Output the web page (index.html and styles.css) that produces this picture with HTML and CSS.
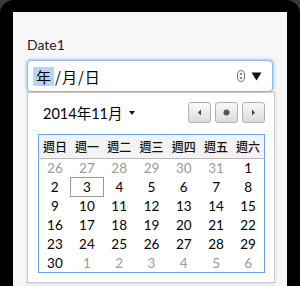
FILE: index.html
```html
<!DOCTYPE html>
<html lang="zh-Hant">
<head>
    <meta charset="UTF-8">
    <meta name="viewport" content="width=device-width, initial-scale=1.0">
    <title>Date1</title>
    <link rel="stylesheet" href="styles.css">
</head>
<body>
    <div class="device">
        <div class="screen">
            <label class="field-label" for="date1">Date1</label>
            <div class="date-input" id="date1">
                <span class="seg seg-active">年</span><span class="sep">/</span><span class="seg">月</span><span class="sep">/</span><span class="seg">日</span>
                <span class="spin">
                    <svg width="8" height="12" viewBox="0 0 8 12">
                        <rect x="0.5" y="0.5" width="7" height="11" rx="3.5" fill="#fff" stroke="#777"/>
                        <path d="M2.3 4.6 L4 2.8 L5.7 4.6 Z" fill="#444"/>
                        <path d="M2.3 7.4 L4 9.2 L5.7 7.4 Z" fill="#444"/>
                    </svg>
                </span>
                <span class="drop">
                    <svg width="11" height="9" viewBox="0 0 11 9"><path d="M0.5 0.5 L10.5 0.5 L5.5 8.5 Z" fill="#111"/></svg>
                </span>
            </div>
            <div class="picker">
                <div class="picker-head">
                    <span class="month">2014年11月<span class="caret"></span></span>
                    <div class="nav">
                        <button class="nav-btn"><svg width="5" height="7" viewBox="0 0 5 7"><path d="M4 0.5 L4 6.5 L1 3.5 Z" fill="#444"/></svg></button>
                        <button class="nav-btn"><svg width="7" height="7" viewBox="0 0 7 7"><circle cx="3.5" cy="3.5" r="3" fill="#555"/></svg></button>
                        <button class="nav-btn"><svg width="5" height="7" viewBox="0 0 5 7"><path d="M1 0.5 L1 6.5 L4 3.5 Z" fill="#444"/></svg></button>
                    </div>
                </div>
                <table class="cal">
                    <thead>
                        <tr><th>週日</th><th>週一</th><th>週二</th><th>週三</th><th>週四</th><th>週五</th><th>週六</th></tr>
                    </thead>
                    <tbody>
                        <tr><td class="other">26</td><td class="other">27</td><td class="other">28</td><td class="other">29</td><td class="other">30</td><td class="other">31</td><td>1</td></tr>
                        <tr><td>2</td><td class="today">3</td><td>4</td><td>5</td><td>6</td><td>7</td><td>8</td></tr>
                        <tr><td>9</td><td>10</td><td>11</td><td>12</td><td>13</td><td>14</td><td>15</td></tr>
                        <tr><td>16</td><td>17</td><td>18</td><td>19</td><td>20</td><td>21</td><td>22</td></tr>
                        <tr><td>23</td><td>24</td><td>25</td><td>26</td><td>27</td><td>28</td><td>29</td></tr>
                        <tr><td>30</td><td class="other">1</td><td class="other">2</td><td class="other">3</td><td class="other">4</td><td class="other">5</td><td class="other">6</td></tr>
                    </tbody>
                </table>
            </div>
        </div>
    </div>
</body>
</html>
```

FILE: styles.css
```css
html, body {
    margin: 0;
    padding: 0;
    background: #3a3a3a;
}
body {
    font-family: Lato, "Noto Sans CJK TC", sans-serif;
    color: #111;
}
.device {
    width: 300px;
    height: 286px;
    box-sizing: border-box;
    background: #000;
    border-radius: 14px 14px 0 0;
    padding: 12px 13px 0 13px;
    overflow: hidden;
}
.screen {
    height: 274px;
    background: #f7f7f7;
    padding: 24px 12px 0 14px;
    box-sizing: border-box;
}
.field-label {
    display: block;
    font-size: 14px;
    line-height: 17px;
    margin-bottom: 7px;
    color: #222;
}
.date-input {
    width: 246px;
    height: 32px;
    box-sizing: border-box;
    display: flex;
    align-items: center;
    padding-left: 5px;
    background: #fff;
    border: 1px solid #8db7e8;
    border-radius: 4px;
    box-shadow: 0 0 3px 1px rgba(110, 165, 230, 0.55);
    font-family: "Noto Sans CJK TC", sans-serif;
    font-size: 15px;
    color: #000;
}
.seg {
    line-height: 19px;
}
.seg-active {
    background: #b5d5fb;
    padding: 0 3px;
}
.sep {
    margin: 0 1px;
}
.spin {
    margin-left: auto;
    display: flex;
}
.drop {
    display: flex;
    margin: 0 10px 0 6px;
}
.picker {
    width: 248px;
    height: 191px;
    box-sizing: border-box;
    background: #fff;
    border: 1px solid #c9c9c9;
    box-shadow: 0 1px 3px rgba(0, 0, 0, 0.12);
    padding: 9px 9px 10px 10px;
}
.picker-head {
    display: flex;
    align-items: center;
    justify-content: space-between;
    height: 21px;
    margin-bottom: 11px;
}
.month {
    padding-left: 5px;
    font-size: 14.5px;
    display: flex;
    align-items: center;
    color: #000;
}
.caret {
    display: inline-block;
    margin-left: 7px;
    border-left: 3.5px solid transparent;
    border-right: 3.5px solid transparent;
    border-top: 4px solid #111;
}
.nav {
    display: flex;
    gap: 4px;
}
.nav-btn {
    width: 23px;
    height: 21px;
    padding: 0;
    display: flex;
    align-items: center;
    justify-content: center;
    border: 1px solid #b0b0b0;
    border-radius: 3px;
    background: linear-gradient(#fafafa, #dcdcdc);
}
.cal {
    width: 227px;
    border-collapse: collapse;
    table-layout: fixed;
    border: 1px solid #6aa0f2;
    font-size: 13.5px;
}
.cal th {
    height: 23px;
    padding: 0;
    background: #f3f3f3;
    border-bottom: 1px solid #b9b9b9;
    font-family: "Noto Sans CJK TC", sans-serif;
    font-size: 12px;
    font-weight: 500;
    color: #111;
}
.cal td {
    height: 19px;
    padding: 0;
    text-align: center;
    color: #000;
    box-sizing: border-box;
}
.cal td.other {
    color: #9a9a9a;
}
.cal td.today {
    border: 1px solid #9a9a9a;
}
```
